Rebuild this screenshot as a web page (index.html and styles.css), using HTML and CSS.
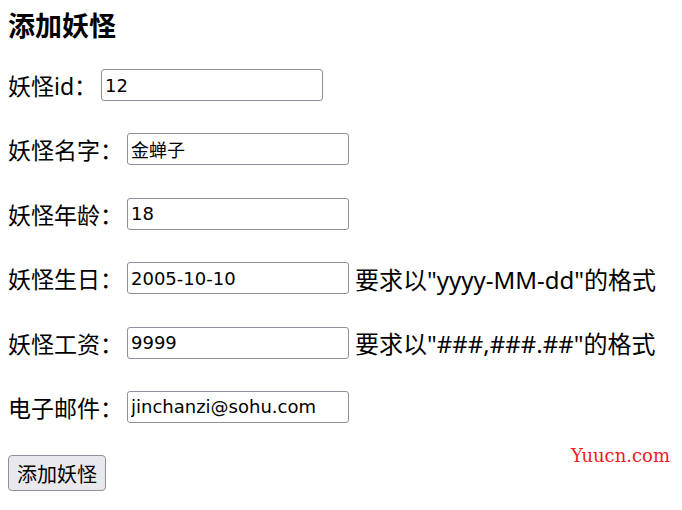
FILE: index.html
```html
<!DOCTYPE html>
<html lang="zh-CN">
<head>
    <meta charset="UTF-8">
    <meta name="viewport" content="width=device-width, initial-scale=1.0">
    <title>添加妖怪</title>
    <link rel="stylesheet" href="styles.css">
</head>
<body>
    <h3 class="title">添加妖怪</h3>

    <form class="form" action="#" method="post">
        <div class="row">
            <label class="label">妖怪id：</label>
            <input class="field" type="text" name="id" value="12">
        </div>
        <div class="row">
            <label class="label">妖怪名字：</label>
            <input class="field" type="text" name="name" value="金蝉子">
        </div>
        <div class="row">
            <label class="label">妖怪年龄：</label>
            <input class="field" type="text" name="age" value="18">
        </div>
        <div class="row">
            <label class="label">妖怪生日：</label>
            <input class="field" type="text" name="birth" value="2005-10-10">
            <span class="hint">要求以"yyyy-MM-dd"的格式</span>
        </div>
        <div class="row">
            <label class="label">妖怪工资：</label>
            <input class="field" type="text" name="salary" value="9999">
            <span class="hint">要求以"###,###.##"的格式</span>
        </div>
        <div class="row">
            <label class="label">电子邮件：</label>
            <input class="field" type="text" name="email" value="jinchanzi@sohu.com">
        </div>
        <button class="btn" type="submit">添加妖怪</button>
    </form>

    <div class="mark">Yuucn.com</div>
</body>
</html>
```

FILE: styles.css
```css
body {
    margin: 8px;
    font-family: "Noto Sans", "Noto Sans CJK SC", sans-serif;
    color: #000;
    background: #fff;
}
.title {
    margin: 0;
    font-family: "Noto Sans CJK SC", sans-serif;
    font-size: 27px;
    line-height: 34px;
    font-weight: bold;
}
.form {
    display: flex;
    flex-direction: column;
    align-items: flex-start;
    gap: 32.4px;
    margin-top: 27px;
}
.row {
    display: flex;
    align-items: center;
    height: 32px;
}
.label {
    font-family: "Noto Sans", "Noto Sans CJK SC", sans-serif;
    font-size: 23px;
    margin-right: 4px;
    white-space: nowrap;
}
.field {
    box-sizing: border-box;
    width: 222px;
    height: 32px;
    padding: 2px 3px;
    border: 1px solid #8f8f9d;
    border-radius: 3px;
    font-family: "DejaVu Sans", "Noto Sans CJK SC", sans-serif;
    font-size: 18px;
    color: #000;
}
.hint {
    margin-left: 6px;
    font-size: 24px;
    white-space: nowrap;
}
.btn {
    box-sizing: border-box;
    height: 36px;
    padding: 0 8px;
    border: 1px solid #8f8f9d;
    border-radius: 4px;
    background: #e9e9ed;
    font-family: "Noto Sans CJK SC", sans-serif;
    font-size: 20px;
    color: #000;
}
.mark {
    position: absolute;
    top: 445px;
    right: 12px;
    font-family: "DejaVu Serif", serif;
    font-size: 18px;
    color: #ee1c25;
}
```
